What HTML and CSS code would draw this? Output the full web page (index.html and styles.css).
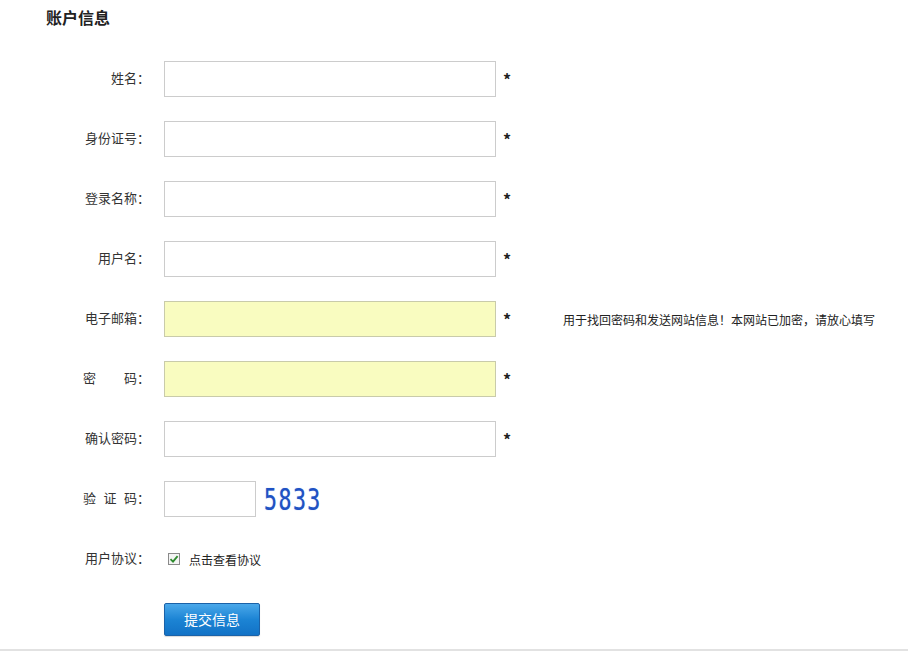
FILE: index.html
```html
<!DOCTYPE html>
<html lang="zh-CN">
<head>
    <meta charset="UTF-8">
    <title>账户信息</title>
    <link rel="stylesheet" href="styles.css">
</head>
<body>
    <div class="page">
        <h2 class="title">账户信息</h2>

        <div class="row">
            <label class="label" for="name">姓名：</label>
            <input class="field" type="text" id="name">
            <span class="star">*</span>
        </div>
        <div class="row">
            <label class="label" for="idcard">身份证号：</label>
            <input class="field" type="text" id="idcard">
            <span class="star">*</span>
        </div>
        <div class="row">
            <label class="label" for="login">登录名称：</label>
            <input class="field" type="text" id="login">
            <span class="star">*</span>
        </div>
        <div class="row">
            <label class="label" for="user">用户名：</label>
            <input class="field" type="text" id="user">
            <span class="star">*</span>
        </div>
        <div class="row">
            <label class="label" for="email">电子邮箱：</label>
            <input class="field field-yellow" type="text" id="email">
            <span class="star">*</span>
            <span class="note">用于找回密码和发送网站信息！本网站已加密，请放心填写</span>
        </div>
        <div class="row">
            <label class="label" for="pwd">密<span class="gap"></span>码：</label>
            <input class="field field-yellow" type="password" id="pwd">
            <span class="star">*</span>
        </div>
        <div class="row">
            <label class="label" for="pwd2">确认密码：</label>
            <input class="field" type="password" id="pwd2">
            <span class="star">*</span>
        </div>
        <div class="row">
            <label class="label" for="code">验<span class="gap-sm"></span>证<span class="gap-sm"></span>码：</label>
            <input class="field field-short" type="text" id="code">
            <span class="captcha">5833</span>
        </div>
        <div class="row">
            <span class="label">用户协议：</span>
            <label class="agree">
                <span class="checkbox">
                    <svg width="10" height="10" viewBox="0 0 10 10"><path d="M1.5 5.2 L4 7.6 L8.6 2.2" fill="none" stroke="#2e8b2e" stroke-width="1.8"/></svg>
                </span>
                点击查看协议
            </label>
        </div>
        <div class="row row-btn">
            <button class="submit">提交信息</button>
        </div>
    </div>
    <div class="bottom-line"></div>
</body>
</html>
```

FILE: styles.css
```css
body {
    margin: 0;
    background-color: #FFFFFF;
    color: #333333;
    font-family: "Noto Sans CJK SC", "Liberation Sans", sans-serif;
    font-size: 13px;
}

.page {
    height: 649px;
}

.title {
    margin: 0;
    padding: 6px 0 0 46px;
    height: 49px;
    box-sizing: border-box;
    font-size: 16px;
    font-weight: bold;
    line-height: 22px;
    color: #222222;
}

.row {
    display: flex;
    align-items: center;
    height: 60px;
}

.label {
    width: 150px;
    text-align: right;
    margin-right: 14px;
    line-height: 20px;
    position: relative;
    top: -1px;
}

.gap {
    display: inline-block;
    width: 28px;
}

.gap-sm {
    display: inline-block;
    width: 7.5px;
}

.field {
    width: 332px;
    height: 36px;
    box-sizing: border-box;
    margin: 0;
    border: 1px solid #cccccc;
    background-color: #FFFFFF;
    padding: 0 6px;
    outline: none;
}

.field-yellow {
    background-color: #f9fcc0;
    border-color: #c9cbaa;
}

.field-short {
    width: 92px;
}

.star {
    width: 67px;
    padding-left: 7px;
    box-sizing: border-box;
    font-size: 16px;
    font-weight: bold;
    color: #222222;
    line-height: 16px;
}

.note {
    font-size: 12px;
    color: #222222;
}

.captcha {
    display: inline-block;
    margin-left: 8px;
    font-family: "DejaVu Sans Mono", monospace;
    font-size: 30px;
    color: #1f52c4;
    letter-spacing: 2px;
    transform: scaleX(0.72);
    transform-origin: left center;
    text-shadow: 0 0 1px #7d9de0;
}

.agree {
    display: flex;
    align-items: center;
    font-size: 12px;
    color: #222222;
}

.checkbox {
    display: inline-flex;
    align-items: center;
    justify-content: center;
    width: 12px;
    height: 12px;
    box-sizing: border-box;
    border: 1px solid #8a8a8a;
    background-color: #f4f4f4;
    margin: 0 9px 0 4px;
}

.row-btn {
    padding-left: 164px;
}

.submit {
    width: 96px;
    height: 33px;
    border: 1px solid #1b62a8;
    border-radius: 2px;
    background: linear-gradient(#4aa8ea, #1c84d4 50%, #1272c6);
    color: #FFFFFF;
    font-family: "Noto Sans CJK SC", sans-serif;
    font-size: 14px;
    cursor: pointer;
    box-shadow: 0 1px 1px rgba(0, 0, 0, 0.15);
}

.bottom-line {
    height: 2px;
    background-color: #e2e2e2;
}
```
